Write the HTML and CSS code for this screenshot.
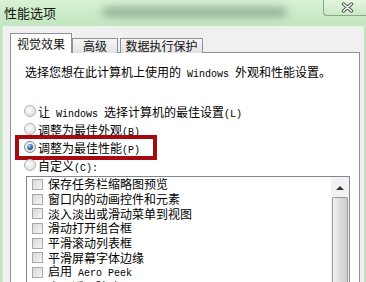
FILE: index.html
```html
<!DOCTYPE html>
<html>
<head>
<meta charset="utf-8">
<link rel="stylesheet" href="styles.css">
</head>
<body>
<div class="win">
  <div class="titlebar">
    <span class="title">性能选项</span>
    <div class="smudge"></div>
    <div class="close">
      <svg width="13" height="11" viewBox="0 0 13 11">
        <path d="M2.5 2 L10.5 9 M10.5 2 L2.5 9" stroke="#505a50" stroke-width="3.4" stroke-linecap="round" fill="none"/>
        <path d="M2.5 2 L10.5 9 M10.5 2 L2.5 9" stroke="#ffffff" stroke-width="1.4" stroke-linecap="round" fill="none"/>
      </svg>
    </div>
  </div>
  <div class="body">
    <div class="tabs">
      <div class="tab sel">视觉效果</div>
      <div class="tab t2">高级</div>
      <div class="tab t3">数据执行保护</div>
    </div>
    <div class="panel">
      <p class="intro">选择您想在此计算机上使用的<span class="m"> Windows </span>外观和性能设置。</p>
      <div class="radios">
        <div class="radio"><span class="rb"></span><span>让<span class="m"> Windows </span>选择计算机的最佳设置<span class="m">(L)</span></span></div>
        <div class="radio"><span class="rb"></span><span>调整为最佳外观<span class="m">(B)</span></span></div>
        <div class="radio hl"><span class="rb on"></span><span>调整为最佳性能<span class="m">(P)</span></span><span class="mark"></span></div>
        <div class="radio"><span class="rb"></span><span>自定义<span class="m">(C):</span></span></div>
      </div>
      <div class="list">
        <div class="items">
          <div class="item"><span class="cb"></span><span>保存任务栏缩略图预览</span></div>
          <div class="item"><span class="cb"></span><span>窗口内的动画控件和元素</span></div>
          <div class="item"><span class="cb"></span><span>淡入淡出或滑动菜单到视图</span></div>
          <div class="item"><span class="cb"></span><span>滑动打开组合框</span></div>
          <div class="item"><span class="cb"></span><span>平滑滚动列表框</span></div>
          <div class="item"><span class="cb"></span><span>平滑屏幕字体边缘</span></div>
          <div class="item"><span class="cb"></span><span>启用<span class="m"> Aero Peek</span></span></div>
          <div class="item"><span class="cb"></span><span>启用透明玻璃</span></div>
        </div>
        <div class="sb">
          <div class="sb-up"><span class="arrow"></span></div>
          <div class="thumb"></div>
        </div>
      </div>
    </div>
  </div>
</div>
</body>
</html>
```
FILE: styles.css
```css
html, body {
  margin: 0;
  padding: 0;
  width: 366px;
  height: 282px;
  overflow: hidden;
}
body {
  background: #c2e4be;
  font-family: "Noto Sans CJK SC", sans-serif;
  font-size: 12px;
  color: #000;
}
.win {
  width: 366px;
  height: 282px;
}
.titlebar {
  height: 26px;
  display: flex;
  align-items: flex-start;
  background: linear-gradient(#d8f2d4, #c2e5be);
}
.title {
  font-size: 13px;
  line-height: 13px;
  margin: 6px 0 0 4px;
  color: #151515;
}
.smudge {
  width: 185px;
  height: 10px;
  margin: 7px 0 0 46px;
  background: #7f9f86;
  filter: blur(4px);
  opacity: 0.75;
  border-radius: 6px;
}
.close {
  margin-left: auto;
  width: 43px;
  height: 16px;
  box-sizing: border-box;
  border: 1px solid #86a986;
  border-top: none;
  border-right: none;
  border-bottom-left-radius: 4px;
  background: linear-gradient(#e4f6e0, #c9e8c5);
  display: flex;
  align-items: center;
  justify-content: center;
  padding-left: 4px;
}
.close svg {
  display: block;
}
.body {
  margin-left: 3px;
  width: 361px;
  height: 256px;
  box-sizing: border-box;
  background: #f0f0f0;
  border-left: 1px solid #f8f8f8;
  padding: 7px 0 0 6px;
}
.tabs {
  display: flex;
  align-items: flex-end;
  height: 20px;
  margin-bottom: -1px;
  position: relative;
  z-index: 1;
}
.tab {
  height: 15px;
  line-height: 14px;
  box-sizing: border-box;
  border: 1px solid #8e9199;
  border-bottom: none;
  background: linear-gradient(#f6f6f6, #e2e2e2);
  text-align: center;
  color: #111;
}
.tab.sel {
  width: 62px;
  height: 20px;
  line-height: 19px;
  background: #fff;
}
.tab.t2 {
  width: 46px;
}
.tab.t3 {
  width: 83px;
  margin-left: 2px;
}
.panel {
  width: 350px;
  height: 240px;
  box-sizing: border-box;
  border: 1px solid #8e9199;
  background: #fff;
  padding: 10px 0 0 13px;
}
.m {
  font-family: "Liberation Mono", monospace;
  font-size: 10px;
}
.intro {
  margin: 0 0 0 1px;
  height: 18px;
  line-height: 18px;
}
.radios {
  margin-top: 21px;
}
.radio {
  height: 18px;
  display: flex;
  align-items: center;
  gap: 2px;
  position: relative;
}
.rb {
  width: 12px;
  height: 12px;
  box-sizing: border-box;
  border-radius: 50%;
  border: 1px solid #b0b0b0;
  background: radial-gradient(circle at 40% 35%, #fcfcfc, #e0e0e0 80%);
  display: flex;
  align-items: center;
  justify-content: center;
}
.rb.on {
  border-color: #7a8a98;
}
.rb.on::after {
  content: "";
  width: 6px;
  height: 6px;
  border-radius: 50%;
  background: radial-gradient(circle at 35% 30%, #a9d4f5, #2a5f94 60%, #123a66);
}
.mark {
  position: absolute;
  left: -9px;
  top: -3px;
  width: 142px;
  height: 25px;
  box-sizing: border-box;
  border: 4px solid #a60a10;
}
.list {
  margin: 2px 0 0 2px;
  width: 324px;
  height: 120px;
  box-sizing: border-box;
  border: 1px solid #828790;
  border-bottom: none;
  display: flex;
}
.items {
  flex: 1;
  padding-left: 5px;
}
.item {
  height: 14.7px;
  display: flex;
  align-items: center;
  gap: 5px;
  line-height: 14px;
}
.cb {
  width: 11px;
  height: 11px;
  box-sizing: border-box;
  border: 1px solid #a8a8a8;
  background: linear-gradient(135deg, #d8d8d8, #f6f6f6);
  flex: none;
}
.sb {
  width: 18px;
  display: flex;
  flex-direction: column;
  background: #f2f2f2;
}
.sb-up {
  height: 19px;
  display: flex;
  align-items: center;
  justify-content: center;
  padding-top: 2px;
  box-sizing: border-box;
}
.arrow {
  width: 0;
  height: 0;
  border-left: 4px solid transparent;
  border-right: 4px solid transparent;
  border-bottom: 4px solid #333;
}
.thumb {
  flex: 1;
  margin: 1px 1px 0 1px;
  border: 1px solid #9a9a9a;
  border-bottom: none;
  border-radius: 2px 2px 0 0;
  background: linear-gradient(90deg, #f2f2f2, #dcdcdc 50%, #cdcdcd);
}
```
